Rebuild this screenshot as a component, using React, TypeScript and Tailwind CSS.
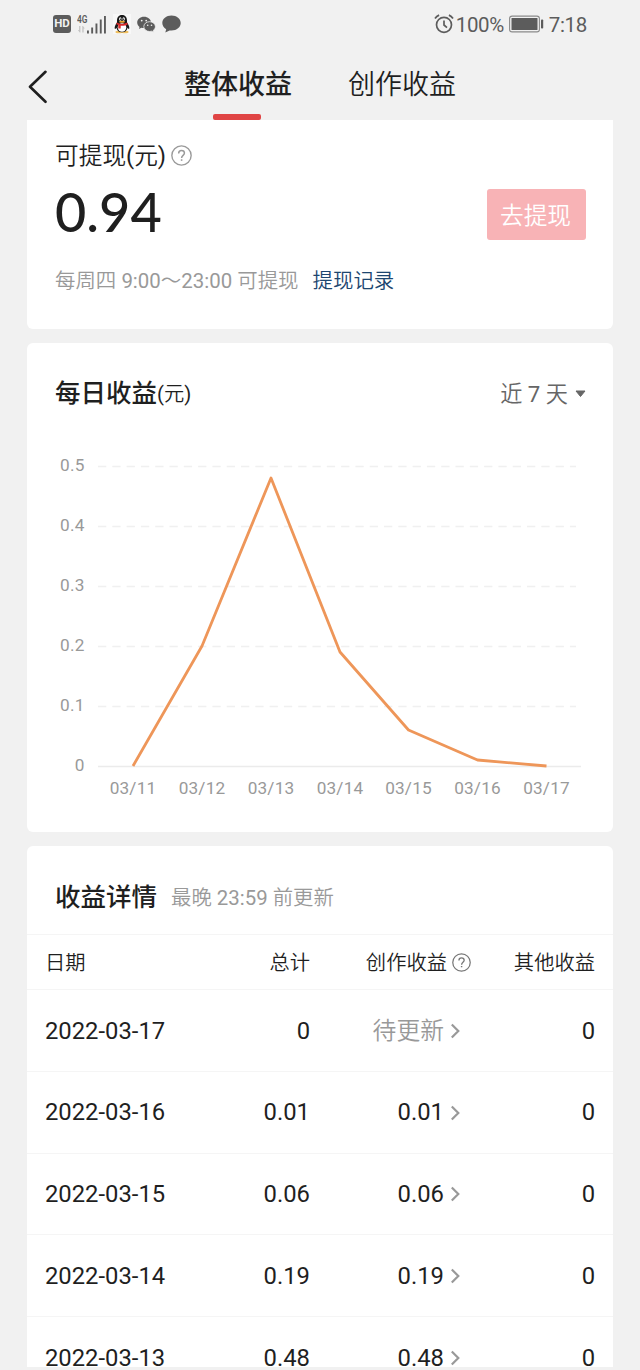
import type { ReactNode } from "react";

const points = [
  { x: 106, label: "03/11", v: 0 },
  { x: 175, label: "03/12", v: 0.2 },
  { x: 244, label: "03/13", v: 0.48 },
  { x: 313, label: "03/14", v: 0.19 },
  { x: 381.5, label: "03/15", v: 0.06 },
  { x: 450.5, label: "03/16", v: 0.01 },
  { x: 519.5, label: "03/17", v: 0 },
];
const ticks = ["0.5", "0.4", "0.3", "0.2", "0.1", "0"];

const rows = [
  { date: "2022-03-17", total: "0", create: "待更新", other: "0", pending: true },
  { date: "2022-03-16", total: "0.01", create: "0.01", other: "0" },
  { date: "2022-03-15", total: "0.06", create: "0.06", other: "0" },
  { date: "2022-03-14", total: "0.19", create: "0.19", other: "0" },
  { date: "2022-03-13", total: "0.48", create: "0.48", other: "0" },
];

function Help({ size, className }: { size: number; className: string }) {
  return (
    <svg width={size} height={size} viewBox="0 0 20 20" fill="none" stroke="currentColor" className={className}>
      <circle cx="10" cy="10" r="9.2" strokeWidth="1.3" />
      <path d="M7.3 8c0-1.7 1.1-2.8 2.7-2.8s2.8 1 2.8 2.5c0 2.1-2.7 2.2-2.7 4.6" strokeWidth="1.4" />
      <path d="M10.1 13.6v1.5" strokeWidth="1.5" />
    </svg>
  );
}

function StatusBar() {
  return (
    <div className="flex h-12 items-center justify-between px-[53px] text-[#5c5c5c]">
      <div className="flex items-center">
        <div className="flex h-[18px] w-[18px] items-center justify-center rounded-[3px] bg-[#5c5c5c] text-[11.5px] leading-none font-bold text-[#f1f1f1]">
          HD
        </div>
        <svg width="31" height="20" viewBox="0 0 31 20" className="ml-[6px]" fill="currentColor">
          <text x="0" y="9" fontSize="11" fontWeight="600" textLength="10.5" lengthAdjust="spacingAndGlyphs">4G</text>
          <path d="M2.700 18.500l-1.800-2.500h1.200V12h1.300v6.500zM6 12l1.800 2.500H6.600v4H5.300V12z" fill="#c4c4c4" />
          <path d="M10 16.500h1.900V19.500H10zM14.200 13.500h1.900v6h-1.900zM18.500 9.500h1.900v10h-1.900zM22.800 5.500h1.900v14h-1.900zM27 2h1.900v17.500H27z" />
        </svg>
        <svg width="18" height="20" viewBox="0 0 18 20" className="ml-[5px]">
          <rect width="18" height="20" fill="#f8f8f8" />
          <ellipse cx="6" cy="18" rx="3.600" ry="1.300" fill="#f0c060" />
          <ellipse cx="12" cy="18" rx="3.600" ry="1.300" fill="#f0c060" />
          <path d="M9 1C5.500 1 4 3.500 4 6.500v2C2.600 10.500 1.200 13 1.800 14.800c.4.600 1.200-.2 1.700-1C4 17 6 18.300 9 18.300s5-1.300 5.500-4.500c.5.800 1.300 1.600 1.700 1 .6-1.800-.8-4.300-2.200-6.300v-2C14 3.500 12.500 1 9 1z" fill="#181818" />
          <ellipse cx="9" cy="13.500" rx="4.300" ry="4.200" fill="#fff" />
          <ellipse cx="7.300" cy="5" rx="1.200" ry="1.700" fill="#fff" />
          <ellipse cx="10.700" cy="5" rx="1.200" ry="1.700" fill="#fff" />
          <circle cx="7.600" cy="5.200" r=".6" />
          <circle cx="10.500" cy="5.200" r=".6" />
          <ellipse cx="9" cy="7.700" rx="3" ry="1" fill="#f0a830" />
          <path d="M3.800 8.600c3 1.900 7.400 1.900 10.400 0l.5 1.800c-2 1.200-4.500 1.600-7 1.400v2.700H5.300V11l-2-.8z" fill="#d92a2a" />
        </svg>
        <svg width="19" height="17" viewBox="0 0 19 17" className="ml-[6px]" fill="currentColor">
          <path d="M7 .8C3.100.800.200 3.300.200 6.500c0 1.800.9 3.300 2.300 4.400L2 13l2.400-1.300c.9.300 1.700.4 2.600.4C10.900 12.100 14 9.600 14 6.500S10.900.800 7 .800z" />
          <path d="M12.600 5.700c-3.300 0-5.800 2.200-5.800 4.900s2.500 4.900 5.800 4.900c.7 0 1.500-.1 2.100-.3l2 1.100-.5-1.800c1.300-.9 2.200-2.300 2.200-3.900 0-2.700-2.500-4.900-5.800-4.900z" stroke="#f1f1f1" strokeWidth=".8" />
          <g fill="#f1f1f1">
            <circle cx="4.700" cy="4.600" r=".9" />
            <circle cx="9.200" cy="4.600" r=".9" />
            <circle cx="10.700" cy="9.200" r=".8" />
            <circle cx="14.500" cy="9.200" r=".8" />
          </g>
        </svg>
        <svg width="19" height="18" viewBox="0 0 19 18" className="ml-[6px]" fill="currentColor">
          <path d="M9.500.5C4.300.500.300 3.800.300 8c0 2.600 1.500 4.800 3.900 6.200L3.300 17.500l4.300-2.100c.6.100 1.200.1 1.900.1 5.200 0 9.200-3.300 9.200-7.500S14.700.500 9.500.500z" />
        </svg>
      </div>
      <div className="flex items-center">
        <svg width="20" height="20" viewBox="0 0 20 20" fill="none" stroke="currentColor" strokeWidth="1.700" className="-ml-[1px]">
          <circle cx="10" cy="10.800" r="7.500" />
          <path d="M10 6.500v4.500l3 2.600M1 4.500C2 3 3.400 1.800 5.100 1.100M19 4.500C18 3 16.600 1.800 14.900 1.100" />
        </svg>
        <span className="ml-[2px] w-[49px] pt-[2px] text-[20.500px] leading-none tracking-[-0.3px]">100%</span>
        <svg width="35" height="18" viewBox="0 0 35 18" className="ml-[4px]" fill="none">
          <rect x=".6" y="1.100" width="29.800" height="15.800" rx="2.500" stroke="#8a8a8a" strokeWidth="1.100" />
          <rect x="2.500" y="3" width="26" height="12" rx=".5" fill="#5c5c5c" />
          <rect x="32" y="4.500" width="2.200" height="9" rx=".8" fill="#5c5c5c" />
        </svg>
        <span className="ml-[5px] pt-[2px] text-[20.500px] leading-none tracking-[-0.3px]">7:18</span>
      </div>
    </div>
  );
}

function Chart() {
  const y = (v: number) => 324 - v * 600;
  return (
    <svg width="586" height="389" viewBox="0 0 586 389" className="block" fontSize="17.200">
      {ticks.map((t, i) => (
        <g key={t}>
          <text x="57.500" y={29 + i * 60} textAnchor="end" fill="#999" letterSpacing=".2">{t}</text>
          <line
            x1="71"
            x2={i === 5 ? 554 : 549}
            y1={24.500 + i * 60}
            y2={24.500 + i * 60}
            stroke={i === 5 ? "#ebebeb" : "#f0f0f0"}
            strokeWidth="1.500"
            strokeDasharray={i === 5 ? undefined : "8.300 6"}
          />
        </g>
      ))}
      <polyline
        points={points.map((p) => `${p.x},${y(p.v)}`).join(" ")}
        fill="none"
        stroke="#ee9659"
        strokeWidth="2.800"
        strokeLinejoin="round"
      />
      {points.map((p) => (
        <text key={p.label} x={p.x} y="352" textAnchor="middle" fill="#999" letterSpacing=".2">{p.label}</text>
      ))}
    </svg>
  );
}

function Cell({ children, className }: { children: ReactNode; className: string }) {
  return <div className={`flex items-center ${className}`}>{children}</div>;
}

export default function App() {
  return (
    <div className="h-[1370px] w-[640px] overflow-hidden bg-[#f1f1f1] font-['Roboto','Noto_Sans_CJK_SC_DemiLight','Noto_Sans_CJK_SC',sans-serif] leading-none whitespace-nowrap text-[#1f1f1f]">
      <StatusBar />
      <header className="flex h-[72px] pl-[28px]">
        <svg width="20" height="34" viewBox="0 0 20 34" className="mt-[22px]" fill="none" stroke="#1f1f1f" strokeWidth="2.600" strokeLinecap="round" strokeLinejoin="round">
          <path d="M17.500 1.800L2 16.800l15.500 15" />
        </svg>
        <div className="ml-[136px] flex w-[108px] flex-col items-center justify-between pt-[23px]">
          <div className="font-['Roboto','Noto_Sans_CJK_SC',sans-serif] text-[27px] leading-[28px] font-medium">整体收益</div>
          <div className="mr-[2px] h-[6px] w-[48px] rounded-[2px] bg-[#e04545]" />
        </div>
        <div className="ml-[56px] pt-[23px] text-[27px] leading-[28px]">创作收益</div>
      </header>

      <section className="mx-[27px] h-[209px] rounded-b-[6px] bg-white pr-[27px] pl-[28px] pt-[20px]">
        <div className="flex h-[30px] items-center text-[23.700px]">
          <span className="pt-[3px]">可提现(元)</span>
          <Help size={21} className="ml-[5px] text-[#9a9a9a]" />
        </div>
        <div className="flex h-[90px] items-center justify-between">
          <div className="pb-[7px] font-['Lato',sans-serif] text-[54px] font-medium">0.94</div>
          <button className="mb-[1px] h-[51px] w-[99px] rounded-[3px] bg-[#f8b3b6] pt-[5px] pr-[2px] text-[23.700px] text-white">去提现</button>
        </div>
        <div className="flex h-[40px] items-center pt-[2px] text-[20.450px] text-[#999]">
          每周四 9:00～23:00 可提现
          <span className="ml-[14px] text-[#1c4670]">提现记录</span>
        </div>
      </section>

      <section className="mx-[27px] mt-[14px] h-[489px] rounded-[6px] bg-white">
        <div className="flex h-[99px] items-center justify-between pr-[27px] pl-[28px] pt-[3px]">
          <h2 className="flex items-center font-['Roboto','Noto_Sans_CJK_SC',sans-serif] text-[25.500px] font-medium">
            每日收益
            <span className="font-['Roboto','Noto_Sans_CJK_SC_DemiLight','Noto_Sans_CJK_SC',sans-serif] text-[20.300px] font-normal">(元)</span>
          </h2>
          <div className="flex items-center text-[22.200px] text-[#666]">
            近 7 天
            <svg width="11" height="8" viewBox="0 0 11 8" className="ml-[7px]" fill="#666">
              <path d="M1 1h9L5.500 6.500z" stroke="#666" strokeLinejoin="round" />
            </svg>
          </div>
        </div>
        <Chart />
      </section>

      <section className="mx-[27px] mt-[14px] h-[521px] overflow-hidden rounded-t-[6px] bg-white">
        <div className="flex h-[88px] items-center px-[28px] pt-[16px]">
          <h2 className="font-['Roboto','Noto_Sans_CJK_SC',sans-serif] text-[25.500px] font-medium">收益详情</h2>
          <span className="ml-[14px] text-[20.400px] text-[#999]">最晚 23:59 前更新</span>
        </div>
        <div className="flex h-[56px] items-center border-y border-[#f5f5f5] px-[18px] text-[20.300px]">
          <Cell className="w-[165px] pt-[3px]">日期</Cell>
          <Cell className="w-[100px] justify-end pt-[3px]">总计</Cell>
          <Cell className="w-[161px] justify-end">
            <span className="pt-[3px]">创作收益</span>
            <Help size={19} className="mt-[2px] ml-[5px] text-[#777]" />
          </Cell>
          <Cell className="flex-1 justify-end pt-[3px]">其他收益</Cell>
        </div>
        {rows.map((r) => (
          <div key={r.date} className="flex h-[81.800px] items-center border-b border-[#f5f5f5] px-[18px] text-[23.800px]">
            <Cell className="w-[165px] pt-[2px]">{r.date}</Cell>
            <Cell className="w-[100px] justify-end pt-[2px]">{r.total}</Cell>
            <Cell className="w-[150px] justify-end">
              <span className={r.pending ? "pt-[3px] text-[#999]" : "pt-[2px]"}>{r.create}</span>
              <svg width="10" height="16" viewBox="0 0 10 16" className="mt-px ml-[6px]" fill="none" stroke="#999" strokeWidth="2.200">
                <path d="M1.800 1.500L8.300 8l-6.500 6.500" />
              </svg>
            </Cell>
            <Cell className="flex-1 justify-end pt-[2px]">{r.other}</Cell>
          </div>
        ))}
      </section>
    </div>
  );
}
